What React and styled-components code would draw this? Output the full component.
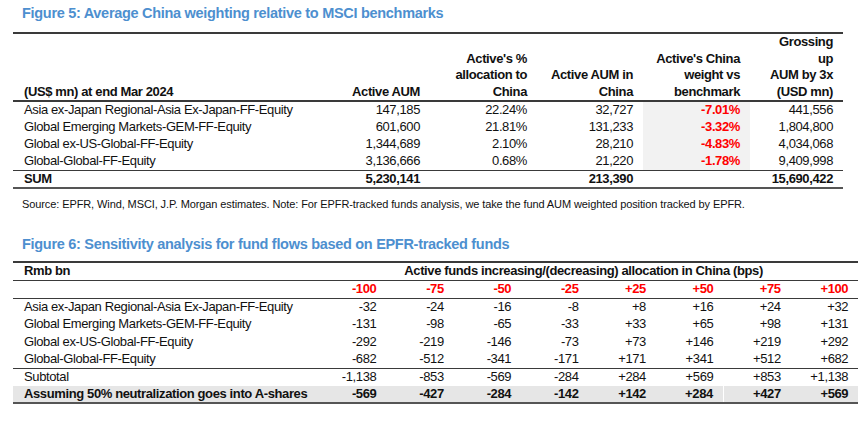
import React from 'react'
import styled, { createGlobalStyle } from 'styled-components'

const GlobalStyle = createGlobalStyle`
    body {
        margin: 0;
        background: #fff;
        font-family: "Liberation Sans Narrow", "Arial Narrow", "Liberation Sans", sans-serif;
        color: #111;
    }
`
const Page = styled.div`
    width: 865px;
    padding-top: 3px;
`
const Title = styled.h2`
    margin: 0 0 0 22px;
    height: ${p => p.$h || 29}px;
    font-size: 14.5px;
    letter-spacing: -0.3px;
    line-height: 20px;
    font-weight: bold;
    color: #4d8fcf;
`
const Table = styled.table`
    margin-left: 13px;
    width: ${p => p.$width}px;
    border-collapse: collapse;
    table-layout: fixed;
    font-size: 13px;
    letter-spacing: -0.38px;
    border-top: 2px solid #3a3a3a;
`
const Th = styled.th`
    padding: 0 10px 0 ${p => (p.$first ? '11px' : '0')};
    text-align: ${p => (p.$first ? 'left' : p.$align || 'right')};
    vertical-align: bottom;
    font-weight: bold;
    line-height: 16.5px;
    white-space: nowrap;
    color: ${p => (p.$red ? '#f00' : '#111')};
`
const HeadRow = styled.tr`
    border-bottom: ${p => p.$border || '2px'} solid #3a3a3a;
    height: ${p => p.$h || 17}px;
`
const Row = styled.tr`
    height: ${p => p.$h || 17}px;
    background: ${p => (p.$shade ? '#e6e6e6' : 'transparent')};
    border-top: ${p => (p.$topLine ? '1.5px solid #3a3a3a' : 'none')};
    border-bottom: ${p => (p.$bottomLine ? '2.5px solid #555' : 'none')};
    font-weight: ${p => (p.$bold ? 'bold' : 'normal')};
`
const Td = styled.td`
    padding: 0 10px 0 ${p => (p.$first ? '11px' : '0')};
    text-align: ${p => (p.$first ? 'left' : 'right')};
    line-height: 16px;
    white-space: nowrap;
    font-weight: ${p => (p.$red ? 'bold' : 'inherit')};
    color: ${p => (p.$red ? '#f00' : '#111')};
    background: ${p => (p.$gray ? '#f2f2f2' : 'transparent')};
    border-left: ${p => (p.$split ? '1px solid #fff' : 'none')};
`
const Source = styled.p`
    margin: 8px 0 0 22px;
    height: 37px;
    font-family: "Liberation Sans", Arial, sans-serif;
    font-size: 11px;
    letter-spacing: -0.1px;
    line-height: 14px;
`

const fund5 = [
    ['Asia ex-Japan Regional-Asia Ex-Japan-FF-Equity', '147,185', '22.24%', '32,727', '-7.01%', '441,556'],
    ['Global Emerging Markets-GEM-FF-Equity', '601,600', '21.81%', '131,233', '-3.32%', '1,804,800'],
    ['Global ex-US-Global-FF-Equity', '1,344,689', '2.10%', '28,210', '-4.83%', '4,034,068'],
    ['Global-Global-FF-Equity', '3,136,666', '0.68%', '21,220', '-1.78%', '9,409,998'],
]

const bps = ['-100', '-75', '-50', '-25', '+25', '+50', '+75', '+100']

const fund6 = [
    ['Asia ex-Japan Regional-Asia Ex-Japan-FF-Equity', ['-32', '-24', '-16', '-8', '+8', '+16', '+24', '+32']],
    ['Global Emerging Markets-GEM-FF-Equity', ['-131', '-98', '-65', '-33', '+33', '+65', '+98', '+131']],
    ['Global ex-US-Global-FF-Equity', ['-292', '-219', '-146', '-73', '+73', '+146', '+219', '+292']],
    ['Global-Global-FF-Equity', ['-682', '-512', '-341', '-171', '+171', '+341', '+512', '+682']],
]

const subtotal = ['-1,138', '-853', '-569', '-284', '+284', '+569', '+853', '+1,138']
const neutral = ['-569', '-427', '-284', '-142', '+142', '+284', '+427', '+569']

function WeightTable() {
    return (
        <Table $width={830}>
            <colgroup>
                <col style={{ width: 307 }} />
                <col style={{ width: 110 }} />
                <col style={{ width: 107 }} />
                <col style={{ width: 106 }} />
                <col style={{ width: 107 }} />
                <col style={{ width: 93 }} />
            </colgroup>
            <thead>
                <HeadRow $h={67}>
                    <Th $first>(US$ mn) at end Mar 2024</Th>
                    <Th>Active AUM</Th>
                    <Th>Active's %<br />allocation to<br />China</Th>
                    <Th>Active AUM in<br />China</Th>
                    <Th>Active's China<br />weight vs<br />benchmark</Th>
                    <Th>Grossing<br />up<br />AUM by 3x<br />(USD mn)</Th>
                </HeadRow>
            </thead>
            <tbody>
                {fund5.map((r, i) => (
                    <Row key={r[0]} $h={i === 1 ? 16.5 : 17.5}>
                        <Td $first>{r[0]}</Td>
                        <Td>{r[1]}</Td>
                        <Td>{r[2]}</Td>
                        <Td>{r[3]}</Td>
                        <Td $gray $red>{r[4]}</Td>
                        <Td>{r[5]}</Td>
                    </Row>
                ))}
                <Row $h={17.5} $bold $topLine $bottomLine>
                    <Td $first>SUM</Td>
                    <Td>5,230,141</Td>
                    <Td />
                    <Td>213,390</Td>
                    <Td />
                    <Td>15,690,422</Td>
                </Row>
            </tbody>
        </Table>
    )
}

function FlowTable() {
    return (
        <Table $width={845}>
            <colgroup>
                <col style={{ width: 306 }} />
                {bps.map(b => <col key={b} style={{ width: 67.4 }} />)}
            </colgroup>
            <thead>
                <HeadRow $h={18.5} $border="1.5px">
                    <Th $first>Rmb bn</Th>
                    <Th colSpan={8} $align="center">Active funds increasing/(decreasing) allocation in China (bps)</Th>
                </HeadRow>
                <HeadRow $h={18} $border="1.5px">
                    <Th $first />
                    {bps.map(b => <Th key={b} $red>{b}</Th>)}
                </HeadRow>
            </thead>
            <tbody>
                {fund6.map(([name, vals]) => (
                    <Row key={name} $h={17.5}>
                        <Td $first>{name}</Td>
                        {vals.map((v, j) => <Td key={j}>{v}</Td>)}
                    </Row>
                ))}
                <Row $h={17.5} $topLine>
                    <Td $first>Subtotal</Td>
                    {subtotal.map((v, j) => <Td key={j}>{v}</Td>)}
                </Row>
                <Row $h={17} $bold $shade $bottomLine>
                    <Td $first>Assuming 50% neutralization goes into A-shares</Td>
                    {neutral.map((v, j) => (
                        <Td key={j} $split={j === 6}>{v}</Td>
                    ))}
                </Row>
            </tbody>
        </Table>
    )
}

export default function App() {
    return (
        <Page>
            <GlobalStyle />
            <Title>Figure 5: Average China weighting relative to MSCI benchmarks</Title>
            <WeightTable />
            <Source>
                Source: EPFR, Wind, MSCI, J.P. Morgan estimates. Note: For EPFR-tracked funds analysis, we take the fund AUM weighted position tracked by EPFR.
            </Source>
            <Title $h={27}>Figure 6: Sensitivity analysis for fund flows based on EPFR-tracked funds</Title>
            <FlowTable />
        </Page>
    )
}
